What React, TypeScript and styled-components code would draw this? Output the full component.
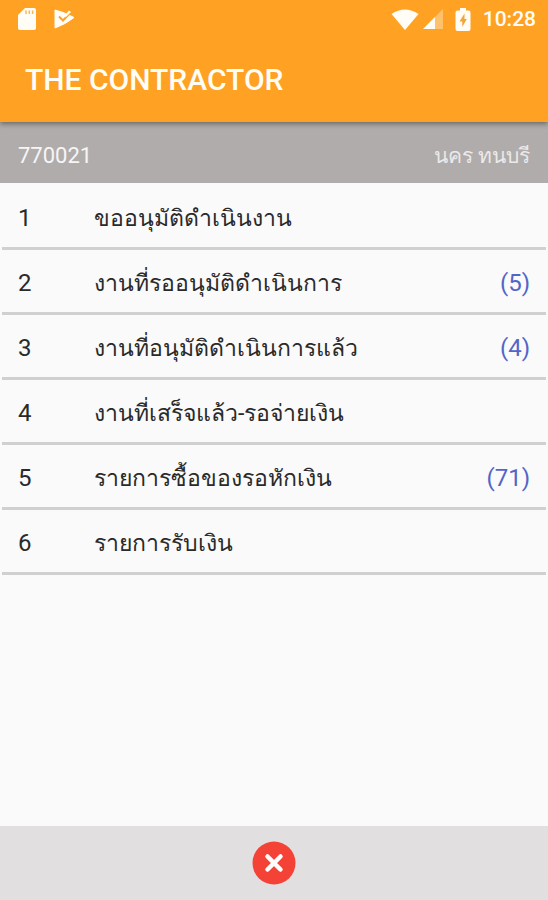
import React from "react";
import styled, { createGlobalStyle } from "styled-components";

const GlobalStyle = createGlobalStyle`
  * { box-sizing: border-box; }
  body { margin: 0; background: #fafafa; font-family: Roboto, sans-serif; }
`;

const Screen = styled.div`
  min-height: 100vh;
  display: flex;
  flex-direction: column;
  background: #fafafa;
`;

const Header = styled.header`
  position: relative;
  background: #ffa223;
  color: #fffdf6;
  box-shadow: 0 2px 5px rgba(0, 0, 0, 0.4);
`;

const StatusBar = styled.div`
  display: flex;
  align-items: center;
  justify-content: space-between;
  height: 38px;
  padding: 0 12px 0 18px;
`;

const StatusGroup = styled.div<{ $gap: number }>`
  display: flex;
  align-items: center;
  gap: ${(p) => p.$gap}px;
`;

const Clock = styled.span`
  font-size: 21px;
  font-weight: 500;
  line-height: 24px;
`;

const Title = styled.h1`
  margin: 0;
  padding: 0 25px;
  font-size: 30px;
  font-weight: 500;
  line-height: 84px;
`;

const UserBar = styled.div`
  display: flex;
  align-items: center;
  justify-content: space-between;
  height: 61px;
  padding: 6px 18px 0;
  background: #b0acab;
  color: #f7f5f5;
  font-size: 22px;
`;

const UserName = styled.span`
  color: #ebe9e9;
  font-size: 21px;
`;

const List = styled.ul`
  flex: 1;
  margin: 0;
  padding: 2px 2px 0;
  list-style: none;
`;

const Row = styled.button`
  display: flex;
  align-items: center;
  width: 100%;
  height: 65px;
  padding: 4px 16px 0;
  border: 0;
  border-bottom: 3px solid #d0d0d0;
  background: transparent;
  color: #2a2a2a;
  font: inherit;
  font-size: 24px;
  text-align: left;
`;

const Index = styled.span`
  width: 76px;
`;

const Label = styled.span`
  flex: 1;
  font-size: 23px;
  white-space: nowrap;
`;

const Count = styled.span`
  color: #5465c8;
`;

const Footer = styled.footer`
  display: flex;
  align-items: center;
  justify-content: center;
  height: 74px;
  background: #e1dfdf;
`;

const CloseButton = styled.button`
  display: flex;
  padding: 0;
  border: 0;
  background: transparent;
`;

const SdCardIcon = () => (
  <svg width="20" height="22" viewBox="0 0 20 22" aria-hidden="true">
    <path fill="#fffdf6" d="M7 0H16Q18 0 18 2V20Q18 22 16 22H2Q0 22 0 20V7Z" />
    <path d="M8 2.5V6M11.3 2.5V6M14.6 2.5V6" stroke="#ffa223" strokeWidth="1.5" opacity="0.8" />
  </svg>
);

const PlayCheckIcon = () => (
  <svg width="22" height="20" viewBox="0 0 22 20" aria-hidden="true">
    <path
      fill="#fffdf6"
      stroke="#fffdf6"
      strokeLinejoin="round"
      d="M1 1Q10 3 20 8.500Q12 15 1 19Z"
    />
    <path d="M5 7.500L9 11.500L18 2" fill="none" stroke="#ffa223" strokeWidth="2" />
    <path d="M11 6L15 1.500L17 3L11.500 8.500" fill="#fffdf6" />
  </svg>
);

const WifiIcon = () => (
  <svg width="28" height="21" viewBox="0 0 28 21" aria-hidden="true">
    <path fill="#fffdf6" d="M0.500 5Q14-4 27.500 5L14 21Z" />
  </svg>
);

const SignalIcon = () => (
  <svg width="20" height="20" viewBox="0 0 20 20" aria-hidden="true">
    <path fill="#fffdf6" opacity="0.35" d="M0 20L20 0V20Z" />
    <path fill="#fffdf6" d="M0 20L12 8V20Z" />
  </svg>
);

const BatteryIcon = () => (
  <svg width="16" height="23" viewBox="0 0 16 23" aria-hidden="true">
    <path fill="#fffdf6" d="M5 0H11V2.500H13.500Q15.500 2.500 15.500 4.500V21Q15.500 23 13.500 23H2.500Q0.500 23 0.500 21V4.500Q0.500 2.500 2.500 2.500H5Z" />
    <path fill="#f5a437" d="M9.500 5.500L4.500 13.500H7.300V19L11.800 11H9.500Z" />
  </svg>
);

const CloseIcon = () => (
  <svg width="44" height="44" viewBox="0 0 44 44" aria-hidden="true">
    <circle cx="22" cy="22" r="21.500" fill="#f44336" />
    <path d="M15.500 15.500L28.500 28.500M28.500 15.500L15.500 28.500" stroke="#fff" strokeWidth="4.500" strokeLinecap="round" />
  </svg>
);

const items = [
  { label: "ขออนุมัติดำเนินงาน" },
  { label: "งานที่รออนุมัติดำเนินการ", count: 5 },
  { label: "งานที่อนุมัติดำเนินการแล้ว", count: 4 },
  { label: "งานที่เสร็จแล้ว-รอจ่ายเงิน" },
  { label: "รายการซื้อของรอหักเงิน", count: 71 },
  { label: "รายการรับเงิน" },
];

export default function App() {
  return (
    <Screen>
      <GlobalStyle />
      <Header>
        <StatusBar>
          <StatusGroup $gap={16}>
            <SdCardIcon />
            <PlayCheckIcon />
          </StatusGroup>
          <StatusGroup $gap={12}>
            <StatusGroup $gap={4}>
              <WifiIcon />
              <SignalIcon />
            </StatusGroup>
            <BatteryIcon />
            <Clock>10:28</Clock>
          </StatusGroup>
        </StatusBar>
        <Title>THE CONTRACTOR</Title>
      </Header>
      <UserBar>
        <span>770021</span>
        <UserName lang="th">นคร ทนบรี</UserName>
      </UserBar>
      <List>
        {items.map((item, i) => (
          <li key={item.label}>
            <Row type="button">
              <Index>{i + 1}</Index>
              <Label lang="th">{item.label}</Label>
              {item.count !== undefined && <Count>({item.count})</Count>}
            </Row>
          </li>
        ))}
      </List>
      <Footer>
        <CloseButton type="button" aria-label="Close">
          <CloseIcon />
        </CloseButton>
      </Footer>
    </Screen>
  );
}
